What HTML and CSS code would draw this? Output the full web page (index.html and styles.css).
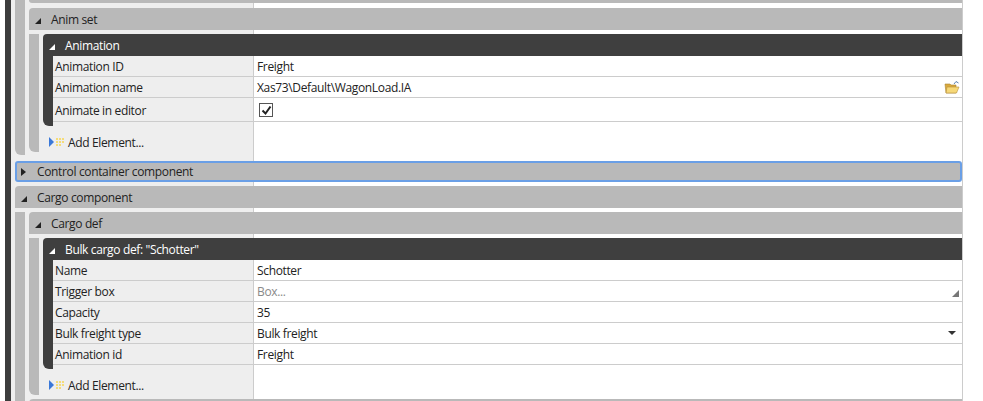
FILE: index.html
```html
<!DOCTYPE html>
<html lang="en">
<head>
    <meta charset="UTF-8">
    <title>Property editor</title>
    <link rel="stylesheet" href="styles.css">
</head>
<body>
    <div class="tree">
        <div class="outer">
            <div class="body first">
                <div class="clipped"><span>Animation gear assembling</span></div>
                <div class="group level-2">
                    <div class="head"><span class="open"></span>Anim set</div>
                    <div class="body">
                        <div class="group level-3">
                            <div class="head dark"><span class="open white"></span>Animation</div>
                            <div class="body dark-bar">
                                <div class="row"><div class="key">Animation ID</div><div class="val">Freight</div></div>
                                <div class="row"><div class="key">Animation name</div><div class="val">Xas73\Default\WagonLoad.IA
                                    <svg class="folder" width="16" height="14" viewBox="0 0 16 14">
                                        <path d="M1 4h5l1 1h5v8H2z" fill="#d9a93c" stroke="#a98432" stroke-width=".6"/>
                                        <path d="M3 7h12l-2.500 6H2z" fill="#f6d878" stroke="#b8923c" stroke-width=".6"/>
                                        <path d="M10 4l2-2.500 2.500 1.500" fill="none" stroke="#5a82b4"/>
                                    </svg>
                                </div></div>
                                <div class="row tall"><div class="key">Animate in editor</div><div class="val">
                                    <span class="check"><svg width="11" height="11" viewBox="0 0 11 11"><path d="M1.500 5.500l3 3 5-7" fill="none" stroke="#222" stroke-width="2"/></svg></span>
                                </div></div>
                            </div>
                        </div>
                        <div class="add">
                            <svg width="16" height="10" viewBox="0 0 16 10"><path d="M0 0l5 5-5 5z" fill="#3a78d8"/><path d="M7 1h2v2H7zM10 1h2v2h-2zM13 1h2v2h-2zM7 4h2v2H7zM10 4h2v2h-2zM13 4h2v2h-2zM7 7h2v2H7zM10 7h2v2h-2z" fill="#f5dc78"/></svg>
                            Add Element...
                        </div>
                    </div>
                </div>
            </div>
            <div class="head focused"><span class="closed"></span>Control container component</div>
            <div class="group level-1">
                <div class="head"><span class="open"></span>Cargo component</div>
                <div class="body">
                    <div class="group level-2">
                        <div class="head"><span class="open"></span>Cargo def</div>
                        <div class="body">
                            <div class="group level-3">
                                <div class="head dark"><span class="open white"></span>Bulk cargo def: "Schotter"</div>
                                <div class="body dark-bar">
                                    <div class="row"><div class="key">Name</div><div class="val">Schotter</div></div>
                                    <div class="row"><div class="key">Trigger box</div><div class="val muted">Box...<span class="corner"></span></div></div>
                                    <div class="row"><div class="key">Capacity</div><div class="val">35</div></div>
                                    <div class="row"><div class="key">Bulk freight type</div><div class="val">Bulk freight<span class="drop"></span></div></div>
                                    <div class="row"><div class="key">Animation id</div><div class="val">Freight</div></div>
                                </div>
                            </div>
                            <div class="add">
                                <svg width="16" height="10" viewBox="0 0 16 10"><path d="M0 0l5 5-5 5z" fill="#3a78d8"/><path d="M7 1h2v2H7zM10 1h2v2h-2zM13 1h2v2h-2zM7 4h2v2H7zM10 4h2v2h-2zM13 4h2v2h-2zM7 7h2v2H7zM10 7h2v2h-2z" fill="#f5dc78"/></svg>
                                Add Element...
                            </div>
                        </div>
                    </div>
                    <div class="group level-2">
                        <div class="head"></div>
                    </div>
                </div>
            </div>
        </div>
    </div>
</body>
</html>
```

FILE: styles.css
```css
html, body {
    margin: 0;
    height: 401px;
    overflow: hidden;
    background: white;
}
body {
    font-family: "Open Sans", sans-serif;
    font-size: 12px;
    letter-spacing: -0.35px;
    color: #222;
}
.tree {
    width: 963px;
    height: 401px;
    overflow: hidden;
}
.outer {
    margin-left: 5px;
    border-left: 6px solid #3c3c3c;
    padding-left: 4px;
    height: 401px;
    background: linear-gradient(to right, #eee 242px, #ccc 242px, #ccc 243px, white 243px);
    border-right: 1px solid #ccc;
}
.head {
    box-sizing: border-box;
    height: 22px;
    padding-top: 1px;
    background: #b9b9b9;
    display: flex;
    align-items: center;
    white-space: nowrap;
}
.head.dark {
    background: #3f3f3f;
    color: white;
}
.head.focused {
    height: 21px;
    padding: 0 0 0 4px;
    border: 2px solid #6a9fe6;
    border-radius: 3px;
    margin-bottom: 4px;
}
.group > .head { border-top-left-radius: 4px; }
.body {
    border-left: 10px solid #b9b9b9;
    border-bottom-left-radius: 6px;
    padding-left: 4px;
}
.body.first {
    margin-bottom: 6px;
    height: 155px;
    box-sizing: border-box;
}
.body.dark-bar {
    border-left-color: #3f3f3f;
    padding-left: 0;
    padding-bottom: 4px;
}
.clipped {
    height: 3px;
    overflow: hidden;
    background: #b9b9b9;
    border-bottom-left-radius: 4px;
}
.clipped span {
    display: block;
    margin: -14px 0 0 22px;
    line-height: 14px;
}
.level-2 { margin-top: 4px; }
.first > .level-2 { margin-top: 5px; }
.level-3 { margin-top: 4px; }
.row {
    display: flex;
    height: 20px;
    border-bottom: 1px solid #ccc;
}
.row.tall { height: 23px; }
.key, .val {
    box-sizing: border-box;
    padding-top: 1px;
    display: flex;
    align-items: center;
}
.key {
    width: 200px;
    padding-left: 2px;
    background: #eee;
}
.val {
    flex: 1;
    position: relative;
    margin-left: 1px;
    padding-left: 3px;
    background: white;
}
.muted { color: #8a8a8a; }
.add {
    box-sizing: border-box;
    height: 26px;
    display: flex;
    align-items: flex-start;
    gap: 3px;
    padding: 9px 0 0 6px;
    line-height: 16px;
}
.add svg { margin-top: 2px; }
.open, .closed {
    display: inline-block;
    width: 0;
    height: 0;
    flex: none;
}
.open {
    margin: 2px 10px 0 6px;
    border-left: 6px solid transparent;
    border-bottom: 6px solid #222;
}
.open.white { border-bottom-color: white; }
.closed {
    margin: 0 11px 0 0;
    border-left: 5px solid #222;
    border-top: 4px solid transparent;
    border-bottom: 4px solid transparent;
}
.folder {
    position: absolute;
    right: 2px;
    top: 3px;
}
.check {
    width: 12px;
    height: 12px;
    border: 1px solid #555;
    background: white;
    display: flex;
    align-items: center;
    justify-content: center;
    margin-left: 2px;
}
.corner {
    position: absolute;
    right: 3px;
    top: 9px;
    border-left: 7px solid transparent;
    border-bottom: 7px solid #777;
}
.drop {
    position: absolute;
    right: 6px;
    top: 8px;
    border-left: 4px solid transparent;
    border-right: 4px solid transparent;
    border-top: 4px solid #333;
}
```
